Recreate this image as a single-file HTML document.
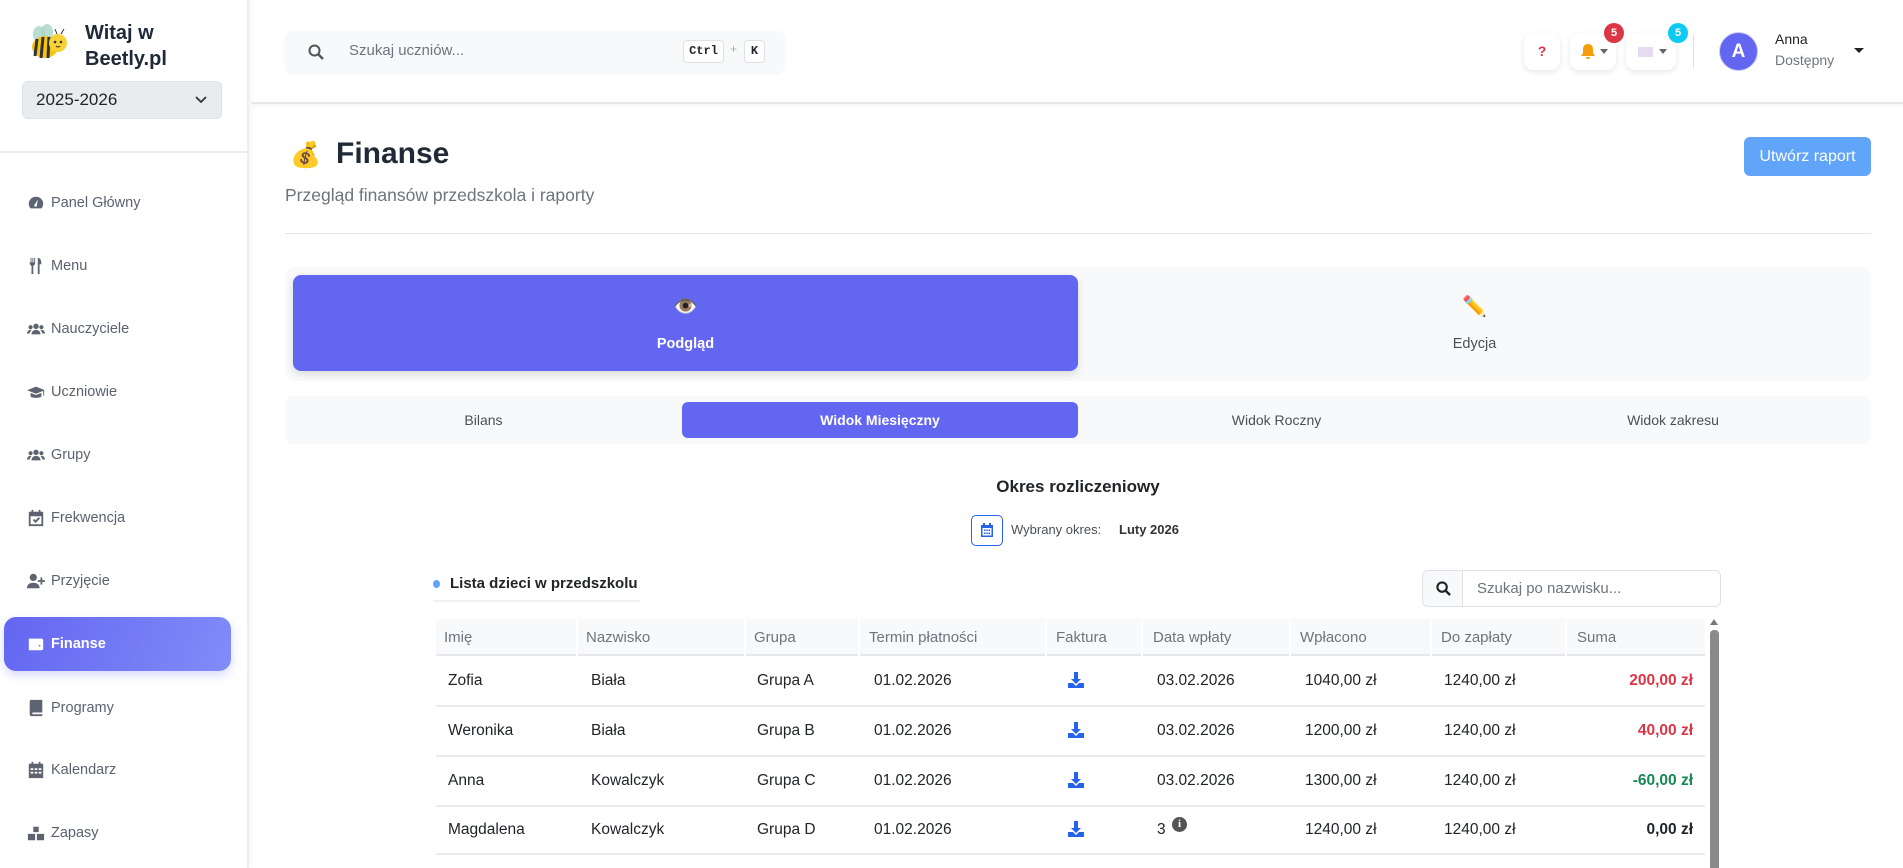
<!DOCTYPE html>
<html><head><meta charset="utf-8"><style>
*{box-sizing:border-box;margin:0;padding:0}
body{width:1903px;height:868px;overflow:hidden;background:#fff;font-family:"Liberation Sans","Noto Sans CJK JP",sans-serif;color:#212529;position:relative}
.abs{position:absolute}
.sb{left:0;top:0;width:249px;height:868px;background:#fff;border-right:2px solid #eceef1;box-shadow:2px 0 6px rgba(0,0,0,.04)}
.nav{position:absolute;left:0;width:249px;height:30px;display:flex;align-items:center;font-size:14.5px;color:#5a6270}
.nav svg{position:absolute;left:27px;width:18px;height:18px;fill:#5d6370}
.nav span{position:absolute;left:51px}
.th{position:absolute;top:619px;height:37px;line-height:37px;font-size:15px;color:#6c757d}
.td{position:absolute;font-size:15.5px;color:#212529}
</style></head><body>
<div class="abs sb">
  <div class="abs" style="left:27px;top:22px;width:42px;height:40px">
    <svg width="42" height="40" viewBox="0 0 42 40"><ellipse cx="12" cy="12" rx="6" ry="8" fill="#a8d4c8" opacity=".8"/><ellipse cx="20" cy="10" rx="6" ry="8" fill="#a8d4c8" opacity=".8"/><ellipse cx="18" cy="25" rx="13" ry="11" fill="#f5c518"/><path d="M10 17 L8 34 M16 15 L14 36 M22 15 L21 36" stroke="#333" stroke-width="3"/><circle cx="31" cy="21" r="9" fill="#f8d038"/><circle cx="28" cy="20" r="1.3" fill="#333"/><circle cx="34" cy="20" r="1.3" fill="#333"/><path d="M29 24 q2 2 4 0" stroke="#333" fill="none"/><path d="M30 12 l-2 -5 M34 12 l3 -5" stroke="#333"/></svg>
  </div>
  <div class="abs" style="left:85px;top:20px;font-size:20px;font-weight:bold;line-height:26px;color:#1f2937">Witaj w<br>Beetly.pl</div>
  <div class="abs" style="left:22px;top:81px;width:200px;height:38px;background:#e9ecef;border:1px solid #dee2e6;border-radius:6px;font-size:17px;line-height:36px;padding-left:13px;color:#212529">2025-2026
    <svg class="abs" style="right:14px;top:14px" width="12" height="8" viewBox="0 0 12 8"><path d="M1 1l5 5 5-5" stroke="#333" stroke-width="1.8" fill="none"/></svg></div>
  <div class="abs" style="left:0;top:151px;width:247px;height:2px;background:#eceef1"></div>
  <div class="nav" style="top:188px"><svg viewBox="0 0 20 20"><path d="M10 3a8 8 0 0 0-8 8c0 2 .7 3.7 2 5h12a8 8 0 0 0 2-5 8 8 0 0 0-8-8zm1 9.5a1.5 1.5 0 1 1-2-1.3L12 6l-1 6.5z"/></svg><span>Panel Główny</span></div>
  <div class="nav" style="top:251px"><svg viewBox="0 0 20 20"><path d="M3 1v6c0 1.5 1 2.5 2 2.7V19h2V9.7C8 9.5 9 8.5 9 7V1H8v5H7V1H6v5H5V1H4v5H3zM12 1c3 0 4 3 4 7h-2v11h-2z"/></svg><span>Menu</span></div>
  <div class="nav" style="top:314px"><svg viewBox="0 0 20 20"><circle cx="10" cy="7" r="3"/><circle cx="4" cy="8" r="2.3"/><circle cx="16" cy="8" r="2.3"/><path d="M5 16c0-3 2-5 5-5s5 2 5 5zM0 15c0-2 1.5-4 4-4l1 .5C3.5 12.5 3 14 3 15zM20 15c0-2-1.5-4-4-4l-1 .5c1.5 1 2 2.5 2 3.5z"/></svg><span>Nauczyciele</span></div>
  <div class="nav" style="top:377px"><svg viewBox="0 0 20 20"><path d="M10 4 0 8l10 4 8-3.2V14h1V8.4L20 8zM4 11v4c2 2 10 2 12 0v-4l-6 2.4z"/></svg><span>Uczniowie</span></div>
  <div class="nav" style="top:440px"><svg viewBox="0 0 20 20"><circle cx="10" cy="7" r="3"/><circle cx="4" cy="8" r="2.3"/><circle cx="16" cy="8" r="2.3"/><path d="M5 16c0-3 2-5 5-5s5 2 5 5zM0 15c0-2 1.5-4 4-4l1 .5C3.5 12.5 3 14 3 15zM20 15c0-2-1.5-4-4-4l-1 .5c1.5 1 2 2.5 2 3.5z"/></svg><span>Grupy</span></div>
  <div class="nav" style="top:503px"><svg viewBox="0 0 20 20"><path d="M5 1h2v2h6V1h2v2h3v16H2V3h3zM4 8v9h12V8zm2.5 4.5 1.5-1.5 1.5 1.5 3.5-3.5 1.5 1.5-5 5z"/></svg><span>Frekwencja</span></div>
  <div class="nav" style="top:566px"><svg viewBox="0 0 20 20"><circle cx="7" cy="6" r="4"/><path d="M0 18c0-4 3-6 7-6s7 2 7 6zM15 6h2v3h3v2h-3v3h-2v-3h-3V9h3z"/></svg><span>Przyjęcie</span></div>
  <div class="abs" style="left:4px;top:617px;width:227px;height:54px;border-radius:12px;background:linear-gradient(110deg,#6366f1,#818cf8);box-shadow:0 4px 10px rgba(99,102,241,.25)"></div>
  <div class="nav" style="top:629px;color:#fff;font-weight:bold"><svg viewBox="0 0 20 20" style="fill:#fff"><path d="M2 4h14a2 2 0 0 1 2 2v9a2 2 0 0 1-2 2H2z"/><circle cx="14" cy="12" r="1" fill="#7b80f5"/></svg><span>Finanse</span></div>
  <div class="nav" style="top:693px"><svg viewBox="0 0 20 20"><path d="M4 1h13v14H6v2h11v2H5a2 2 0 0 1-2-2V3a2 2 0 0 1 1-2zM7 5h8v1H7zm0 3h8v1H7z"/></svg><span>Programy</span></div>
  <div class="nav" style="top:755px"><svg viewBox="0 0 20 20"><path d="M5 1h2v2h6V1h2v2h3v16H2V3h3zM4 8v2h3V8zm4.5 0v2h3V8zM13 8v2h3V8zM4 12v2h3v-2zm4.5 0v2h3v-2zM13 12v2h3v-2z"/></svg><span>Kalendarz</span></div>
  <div class="nav" style="top:818px"><svg viewBox="0 0 20 20"><path d="M7 3h6v6H7zM1 11h8v7H1zm10 0h8v7h-8z"/></svg><span>Zapasy</span></div>
</div>

<!-- header -->
<div class="abs" style="left:251px;top:0;width:1652px;height:104px;border-bottom:2px solid #e5e7eb;box-shadow:0 2px 4px rgba(0,0,0,.04)"></div>
<div class="abs" style="left:285px;top:31px;width:500px;height:42px;background:#f8f9fa;border-radius:8px;box-shadow:0 1px 3px rgba(0,0,0,.04)">
  <svg class="abs" style="left:23px;top:13px" width="16" height="16" viewBox="0 0 16 16"><circle cx="6.5" cy="6.5" r="5" stroke="#555" stroke-width="2" fill="none"/><path d="M10.5 10.5 15 15" stroke="#555" stroke-width="2.4"/></svg>
  <div class="abs" style="left:64px;top:11px;font-size:15px;color:#6c757d">Szukaj uczniów...</div>
  <div class="abs" style="left:398px;top:9px;width:41px;height:23px;border:1px solid #dee2e6;border-radius:4px;background:#fff;font:bold 12px 'Liberation Mono',monospace;line-height:21px;text-align:center">Ctrl</div>
  <div class="abs" style="left:445px;top:11px;font-size:12px;color:#aaa">+</div>
  <div class="abs" style="left:459px;top:9px;width:21px;height:23px;border:1px solid #dee2e6;border-radius:4px;background:#fff;font:bold 12px 'Liberation Mono',monospace;line-height:21px;text-align:center">K</div>
</div>
<div class="abs" style="left:1524px;top:33px;width:36px;height:37px;background:#fff;border-radius:9px;box-shadow:0 2px 6px rgba(0,0,0,.1);text-align:center;line-height:37px;color:#dc3545;font-weight:bold;font-size:14px">?</div>
<div class="abs" style="left:1570px;top:33px;width:46px;height:37px;background:#fff;border-radius:9px;box-shadow:0 2px 6px rgba(0,0,0,.1)">
  <svg class="abs" style="left:11px;top:11px" width="14" height="15" viewBox="0 0 14 15"><path d="M7 0c-3 0-5 2-5 5v4L0 12h14l-2-3V5c0-3-2-5-5-5zM5 13h4a2 2 0 0 1-4 0z" fill="#f59e0b"/></svg>
  <div class="abs" style="left:30px;top:16px;border:4px solid transparent;border-top:5px solid #666"></div></div>
<div class="abs" style="left:1604px;top:23px;width:20px;height:20px;border-radius:50%;background:#dc3545;color:#fff;font-size:11px;font-weight:bold;text-align:center;line-height:20px">5</div>
<div class="abs" style="left:1626px;top:33px;width:50px;height:37px;background:#fff;border-radius:9px;box-shadow:0 2px 6px rgba(0,0,0,.1)">
  <div class="abs" style="left:12px;top:14px;width:15px;height:10px;background:#e6dcf2;border-radius:1px"></div>
  <div class="abs" style="left:33px;top:16px;border:4px solid transparent;border-top:5px solid #666"></div></div>
<div class="abs" style="left:1668px;top:23px;width:20px;height:20px;border-radius:50%;background:#0dcaf0;color:#fff;font-size:11px;font-weight:bold;text-align:center;line-height:20px">5</div>
<div class="abs" style="left:1693px;top:35px;width:1px;height:33px;background:#e0e0e0"></div>
<div class="abs" style="left:1719px;top:32px;width:39px;height:39px;border-radius:50%;background:#6366f1;border:1px solid #c7c9f7;color:#fff;font-size:19px;font-weight:bold;text-align:center;line-height:37px">A</div>
<div class="abs" style="left:1775px;top:31px;font-size:14px;color:#212529">Anna</div>
<div class="abs" style="left:1775px;top:52px;font-size:14px;color:#6c757d">Dostępny</div>
<div class="abs" style="left:1854px;top:48px;border:5px solid transparent;border-top:5px solid #222"></div>

<!-- title -->
<div class="abs" style="left:290px;top:140px;font-size:25px;line-height:30px">💰</div>
<div class="abs" style="left:336px;top:137px;font-size:30px;font-weight:bold;color:#1f2937">Finanse</div>
<div class="abs" style="left:285px;top:185px;font-size:17.5px;color:#6c757d">Przegląd finansów przedszkola i raporty</div>
<div class="abs" style="left:1744px;top:137px;width:127px;height:39px;background:#60a5fa;border-radius:6px;color:#fff;font-size:16px;text-align:center;line-height:39px">Utwórz raport</div>
<div class="abs" style="left:285px;top:233px;width:1586px;height:1px;background:#e3e5e8"></div>

<!-- tabs -->
<div class="abs" style="left:285px;top:267px;width:1586px;height:114px;background:#f8f9fa;border-radius:10px"></div>
<div class="abs" style="left:293px;top:275px;width:785px;height:96px;background:#6366f1;border-radius:8px;box-shadow:0 3px 8px rgba(0,0,0,.12)"></div>
<div class="abs" style="left:293px;top:294px;width:785px;text-align:center;font-size:20px">👁️</div>
<div class="abs" style="left:293px;top:336px;width:785px;text-align:center;font-size:14.5px;color:#fff;font-weight:bold">Podgląd</div>
<div class="abs" style="left:1078px;top:294px;width:793px;text-align:center;font-size:20px">✏️</div>
<div class="abs" style="left:1078px;top:336px;width:793px;text-align:center;font-size:14.5px;color:#495057">Edycja</div>

<div class="abs" style="left:285px;top:396px;width:1586px;height:48px;background:#f8f9fa;border-radius:8px"></div>
<div class="abs" style="left:682px;top:402px;width:396px;height:36px;background:#6366f1;border-radius:6px"></div>
<div class="abs" style="left:285px;top:412px;width:397px;text-align:center;font-size:14px;color:#495057">Bilans</div>
<div class="abs" style="left:682px;top:412px;width:396px;text-align:center;font-size:14px;color:#fff;font-weight:bold">Widok Miesięczny</div>
<div class="abs" style="left:1078px;top:412px;width:397px;text-align:center;font-size:14px;color:#495057">Widok Roczny</div>
<div class="abs" style="left:1475px;top:412px;width:396px;text-align:center;font-size:14px;color:#495057">Widok zakresu</div>

<div class="abs" style="left:878px;top:477px;width:400px;text-align:center;font-size:17px;font-weight:bold;color:#212529">Okres rozliczeniowy</div>
<div class="abs" style="left:971px;top:515px;width:32px;height:31px;border:1.5px solid #2563eb;border-radius:5px">
  <svg class="abs" style="left:9px;top:7px" width="12" height="14" viewBox="0 0 12 14"><path d="M2 0h2v2h4V0h2v2h2v12H0V2h2zM1.5 5v7.5h9V5zM3 6.5h1.5V8H3zm2.3 0h1.5V8H5.3zm2.3 0h1.5V8H7.6zM3 9.5h1.5V11H3zm2.3 0h1.5V11H5.3zm2.3 0h1.5V11H7.6z" fill="#2563eb"/></svg></div>
<div class="abs" style="left:1011px;top:522px;font-size:13px;color:#495057">Wybrany okres:</div>
<div class="abs" style="left:1119px;top:522px;font-size:13px;font-weight:bold;color:#333">Luty 2026</div>

<div class="abs" style="left:433px;top:580px;width:7px;height:8px;border-radius:50%;background:#60a5fa"></div>
<div class="abs" style="left:450px;top:575px;font-size:15px;font-weight:bold;color:#212529">Lista dzieci w przedszkolu</div>
<div class="abs" style="left:433px;top:600px;width:207px;height:2px;background:#eef0f3"></div>
<div class="abs" style="left:1422px;top:570px;width:299px;height:37px;border:1px solid #dee2e6;border-radius:6px;background:#fff">
  <div class="abs" style="left:0;top:0;width:40px;height:35px;background:#f8f9fa;border-right:1px solid #dee2e6;border-radius:6px 0 0 6px"></div>
  <svg class="abs" style="left:13px;top:10px" width="15" height="15" viewBox="0 0 16 16"><circle cx="6.5" cy="6.5" r="5" stroke="#222" stroke-width="2.2" fill="none"/><path d="M10.5 10.5 15 15" stroke="#222" stroke-width="2.6"/></svg>
  <div class="abs" style="left:54px;top:9px;font-size:15px;color:#6c757d">Szukaj po nazwisku...</div></div>

<!-- table -->
<div class="abs" style="left:436px;top:619px;width:1269px;height:37px;background:#f8f9fa;border-bottom:2px solid #e5e7eb"></div>
<div class="th" style="left:444px">Imię</div><div class="th" style="left:586px">Nazwisko</div><div class="th" style="left:754px">Grupa</div><div class="th" style="left:869px">Termin płatności</div><div class="th" style="left:1056px">Faktura</div><div class="th" style="left:1153px">Data wpłaty</div><div class="th" style="left:1300px">Wpłacono</div><div class="th" style="left:1441px">Do zapłaty</div><div class="th" style="left:1577px">Suma</div>
<div class="abs" style="left:576px;top:619px;width:2px;height:249px;background:#fff"></div>
<div class="abs" style="left:744px;top:619px;width:2px;height:249px;background:#fff"></div>
<div class="abs" style="left:858px;top:619px;width:2px;height:249px;background:#fff"></div>
<div class="abs" style="left:1045px;top:619px;width:2px;height:249px;background:#fff"></div>
<div class="abs" style="left:1141px;top:619px;width:2px;height:249px;background:#fff"></div>
<div class="abs" style="left:1289px;top:619px;width:2px;height:249px;background:#fff"></div>
<div class="abs" style="left:1430px;top:619px;width:2px;height:249px;background:#fff"></div>
<div class="abs" style="left:1565px;top:619px;width:2px;height:249px;background:#fff"></div>

<div class="abs" style="left:436px;top:705px;width:1269px;height:2px;background:#e9ebee"></div>
<div class="abs" style="left:436px;top:755px;width:1269px;height:2px;background:#e9ebee"></div>
<div class="abs" style="left:436px;top:805px;width:1269px;height:2px;background:#e9ebee"></div>
<div class="abs" style="left:436px;top:853px;width:1269px;height:2px;background:#e9ebee"></div>

<div class="abs" style="left:1710px;top:630px;width:9px;height:238px;background:#8a8a8a;border-radius:4px 4px 0 0"></div>
<div class="abs" style="left:1710px;top:619px;border:4px solid transparent;border-bottom:6px solid #777;border-top:0"></div>

<!-- rows -->
<div class="td" style="left:448px;top:672px">Zofia</div><div class="td" style="left:591px;top:672px">Biała</div><div class="td" style="left:757px;top:672px">Grupa A</div><div class="td" style="left:874px;top:672px">01.02.2026</div><div class="td" style="left:1157px;top:672px">03.02.2026</div><div class="td" style="left:1305px;top:672px">1040,00 zł</div><div class="td" style="left:1444px;top:672px">1240,00 zł</div><div class="td" style="left:1593px;top:672px;width:100px;text-align:right;color:#dc3545;font-weight:bold">200,00 zł</div>
<div class="td" style="left:448px;top:722px">Weronika</div><div class="td" style="left:591px;top:722px">Biała</div><div class="td" style="left:757px;top:722px">Grupa B</div><div class="td" style="left:874px;top:722px">01.02.2026</div><div class="td" style="left:1157px;top:722px">03.02.2026</div><div class="td" style="left:1305px;top:722px">1200,00 zł</div><div class="td" style="left:1444px;top:722px">1240,00 zł</div><div class="td" style="left:1593px;top:722px;width:100px;text-align:right;color:#dc3545;font-weight:bold">40,00 zł</div>
<div class="td" style="left:448px;top:772px">Anna</div><div class="td" style="left:591px;top:772px">Kowalczyk</div><div class="td" style="left:757px;top:772px">Grupa C</div><div class="td" style="left:874px;top:772px">01.02.2026</div><div class="td" style="left:1157px;top:772px">03.02.2026</div><div class="td" style="left:1305px;top:772px">1300,00 zł</div><div class="td" style="left:1444px;top:772px">1240,00 zł</div><div class="td" style="left:1593px;top:772px;width:100px;text-align:right;color:#198754;font-weight:bold">-60,00 zł</div>
<div class="td" style="left:448px;top:821px">Magdalena</div><div class="td" style="left:591px;top:821px">Kowalczyk</div><div class="td" style="left:757px;top:821px">Grupa D</div><div class="td" style="left:874px;top:821px">01.02.2026</div><div class="td" style="left:1157px;top:821px">3</div><div class="abs" style="left:1172px;top:817px;width:15px;height:15px;border-radius:50%;background:#555;color:#fff;font:bold 11px 'Liberation Serif',serif;text-align:center;line-height:15px">i</div><div class="td" style="left:1305px;top:821px">1240,00 zł</div><div class="td" style="left:1444px;top:821px">1240,00 zł</div><div class="td" style="left:1593px;top:821px;width:100px;text-align:right;font-weight:bold">0,00 zł</div>

<svg class="abs" style="left:1068px;top:672px" width="16" height="16" viewBox="0 0 16 16"><path d="M6 0h4v7h3l-5 5-5-5h3zM0 11h5l3 3 3-3h5v5H0z" fill="#2563eb"/></svg>
<svg class="abs" style="left:1068px;top:722px" width="16" height="16" viewBox="0 0 16 16"><path d="M6 0h4v7h3l-5 5-5-5h3zM0 11h5l3 3 3-3h5v5H0z" fill="#2563eb"/></svg>
<svg class="abs" style="left:1068px;top:772px" width="16" height="16" viewBox="0 0 16 16"><path d="M6 0h4v7h3l-5 5-5-5h3zM0 11h5l3 3 3-3h5v5H0z" fill="#2563eb"/></svg>
<svg class="abs" style="left:1068px;top:821px" width="16" height="16" viewBox="0 0 16 16"><path d="M6 0h4v7h3l-5 5-5-5h3zM0 11h5l3 3 3-3h5v5H0z" fill="#2563eb"/></svg>
</body></html>
